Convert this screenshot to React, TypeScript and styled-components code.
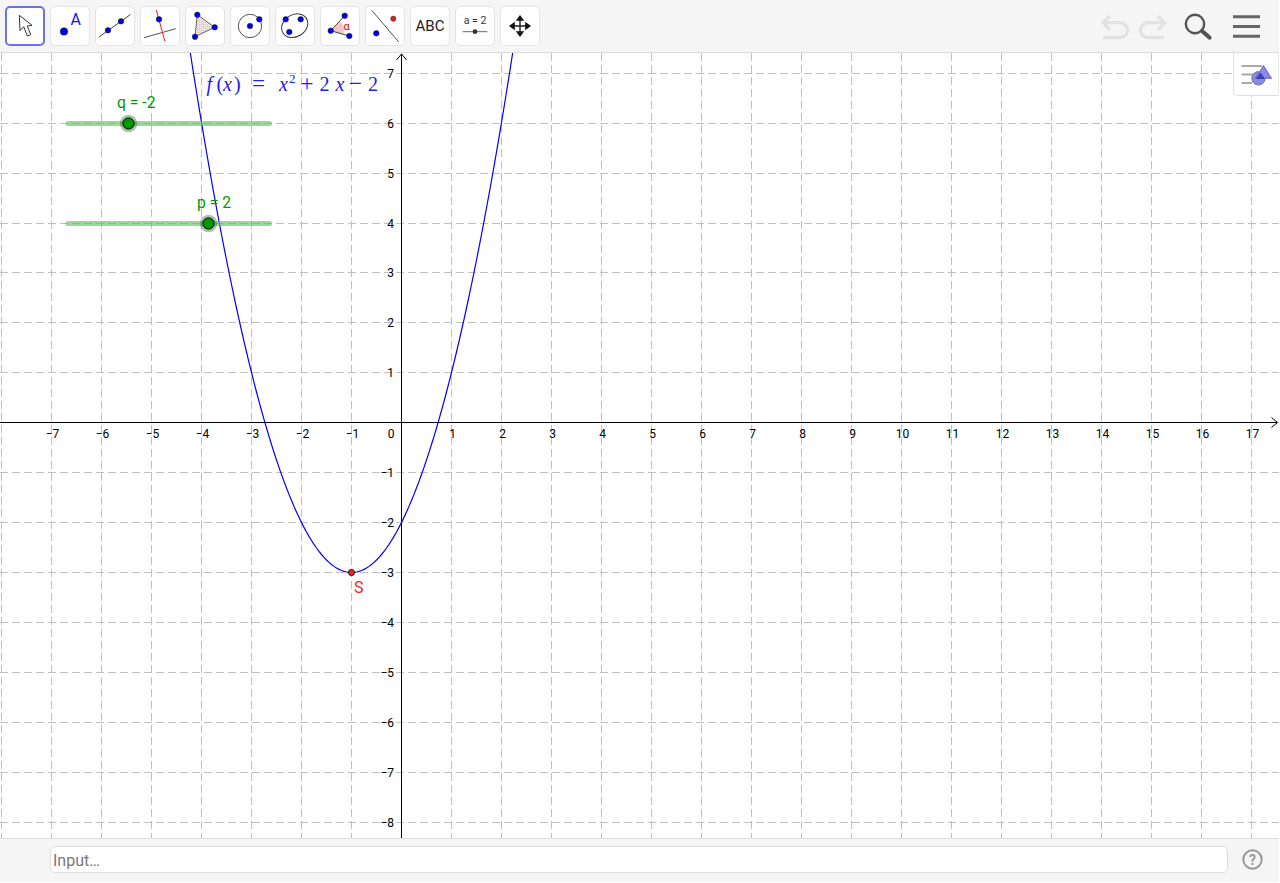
import React from 'react';
import styled, { createGlobalStyle } from 'styled-components';

const Global = createGlobalStyle`
  html, body { margin: 0; padding: 0; background: #fff; }
  body { font-family: Roboto, "Liberation Sans", sans-serif; overflow: hidden; }
`;

const Shell = styled.div`
  width: 1279px;
  height: 882px;
  display: flex;
  flex-direction: column;
`;

const Toolbar = styled.header`
  flex: none;
  height: 46px;
  display: flex;
  align-items: flex-start;
  justify-content: space-between;
  padding: 6px 0 0 5px;
  background: #f5f5f5;
  border-bottom: 1px solid #dcdcdc;
`;

const Tools = styled.div`
  display: flex;
  gap: 5px;
`;

const ToolButton = styled.div<{ $active?: boolean }>`
  width: 40px;
  height: 40px;
  box-sizing: border-box;
  background: #fff;
  border-radius: 5px;
  border: ${p => (p.$active ? '2px solid #6c70f0' : '1px solid #e4e4e4')};
  display: flex;
  align-items: center;
  justify-content: center;
  font-size: 15px;
  color: #222;
  svg { flex: none; }
`;

const Actions = styled.div`
  display: flex;
  align-items: flex-start;
  gap: 11px;
  padding-right: 13px;
  margin-top: -6px;
`;

const Canvas = styled.main`
  position: relative;
  flex: 1;
  min-height: 0;
  overflow: hidden;
  background: #fff;
`;

const Plot = styled.svg`
  display: block;
  width: 1279px;
  height: 785px;
`;

const StyleTab = styled.div`
  position: absolute;
  top: 0;
  right: 0;
  width: 46px;
  height: 43px;
  box-sizing: border-box;
  background: #fff;
  border-left: 1px solid #dedede;
  border-bottom: 1px solid #dedede;
  border-right: 1px solid #ececec;
  border-bottom-left-radius: 5px;
`;

const Footer = styled.footer`
  flex: none;
  height: 41px;
  display: flex;
  align-items: center;
  gap: 14px;
  padding: 0 16px 2px 50px;
  background: #f5f5f5;
  border-top: 1px solid #dcdcdc;
`;

const InputBar = styled.div`
  flex: 1;
  height: 27px;
  box-sizing: border-box;
  background: #fff;
  border: 1px solid #dedede;
  border-radius: 5px;
  padding: 2px 0 0 2px;
  display: flex;
  align-items: center;
  font-size: 16px;
  color: #7d7676;
`;

const Blue = '#0000e6';
const Dot = ({ cx, cy, r = 2.8, fill = Blue }: { cx: number; cy: number; r?: number; fill?: string }) => (
  <circle cx={cx} cy={cy} r={r} fill={fill} stroke="#223" strokeWidth={0.5} />
);

const Ic = ({ children }: { children: React.ReactNode }) => (
  <svg width={40} height={40} viewBox="0 0 40 40">{children}</svg>
);

const ArrowIcon = () => (
  <svg width={36} height={36} viewBox="2 2 36 36">
    <path d="M14.3 9.3 L15 24.7 L18.7 20.7 L22.3 30 L25.7 28.7 L22.3 20 L27 19.3 Z" fill="#fff" stroke="#333" strokeWidth={1} strokeLinejoin="round" />
  </svg>
);
const PointIcon = () => (
  <Ic>
    <Dot cx={14} cy={25.5} r={3.8} />
    <text x={20.5} y={19} fontSize={16} fill="#1414e6" fontFamily="Roboto, sans-serif">A</text>
  </Ic>
);
const LineIcon = () => (
  <Ic>
    <line x1={4} y1={31} x2={35.5} y2={8.5} stroke="#444" strokeWidth={1} />
    <Dot cx={13} cy={24.3} />
    <Dot cx={26} cy={15.3} />
  </Ic>
);
const PerpIcon = () => (
  <Ic>
    <line x1={4} y1={31.7} x2={35.7} y2={22.7} stroke="#555" strokeWidth={1} />
    <line x1={16.3} y1={4} x2={25} y2={35.7} stroke="#f02020" strokeWidth={1} />
    <Dot cx={19} cy={13.3} />
  </Ic>
);
const TriIcon = () => (
  <Ic>
    <defs>
      <pattern id="dots" width={2} height={2} patternUnits="userSpaceOnUse">
        <rect width={2} height={2} fill="#efe4e0" />
        <rect width={1} height={1} fill="#f2b4b4" />
      </pattern>
    </defs>
    <path d="M12.3 8.7 L29.7 21.3 L10 30.7 Z" fill="url(#dots)" stroke="#666" strokeWidth={1} />
    <Dot cx={12.3} cy={8.7} />
    <Dot cx={29.7} cy={21.3} />
    <Dot cx={10} cy={30.7} />
  </Ic>
);
const CircleIcon = () => (
  <Ic>
    <circle cx={20} cy={20} r={11.7} fill="none" stroke="#555" strokeWidth={1} />
    <Dot cx={20} cy={20} />
    <Dot cx={29.3} cy={13.3} />
  </Ic>
);
const ConicIcon = () => (
  <Ic>
    <ellipse cx={19.7} cy={19.7} rx={13.8} ry={11} transform="rotate(-32 19.7 19.7)" fill="none" stroke="#333" strokeWidth={1} />
    <Dot cx={10.7} cy={13.3} />
    <Dot cx={25.7} cy={13.3} />
    <Dot cx={14.3} cy={26} />
  </Ic>
);
const AngleIcon = () => (
  <Ic>
    <path d="M10.7 24.7 L20 15 A 13 13 0 0 1 23.5 27.9 Z" fill="#f7c4c4" stroke="none" />
    <path d="M24.7 9.7 L10.7 24.7 L29.3 30" fill="none" stroke="#444" strokeWidth={1} />
    <Dot cx={24.7} cy={9.7} />
    <Dot cx={10.7} cy={24.7} />
    <Dot cx={29.3} cy={30} />
    <text x={23.5} y={23.5} fontSize={11} fill="#f00000" fontFamily="Roboto, sans-serif">α</text>
  </Ic>
);
const ReflectIcon = () => (
  <Ic>
    <line x1={6.7} y1={4.3} x2={33.7} y2={36} stroke="#555" strokeWidth={1} />
    <Dot cx={11.3} cy={27.3} />
    <Dot cx={28.3} cy={12.7} r={2.6} fill="#f01818" />
  </Ic>
);
const SliderIcon = () => (
  <Ic>
    <text x={20} y={18} fontSize={10.5} fill="#333" textAnchor="middle" fontFamily="Roboto, sans-serif">a = 2</text>
    <line x1={7.7} y1={25.7} x2={32.3} y2={25.7} stroke="#666" strokeWidth={1} />
    <circle cx={20} cy={25.7} r={2.4} fill="#333" />
  </Ic>
);
const MoveIcon = () => (
  <Ic>
    <path d="M20 12 V28 M12 20 H28" stroke="#222" strokeWidth={1.4} />
    <path d="M20 9 L15.8 14.8 H24.2 Z M20 31 L15.8 25.2 H24.2 Z M9 20 L14.8 15.8 V24.2 Z M31 20 L25.2 15.8 V24.2 Z" fill="#111" />
  </Ic>
);

const UndoRedo = () => (
  <svg width={72} height={52} viewBox="0 0 72 52">
    <g fill="none" stroke="#e2e2e2" strokeWidth={3.2}>
      <path d="M5 22.7 H22 A 7.5 7.5 0 0 1 22 37.7 H5" />
      <path d="M12 16 L5 22.7 L12 30" />
      <path d="M67 22.7 H50 A 7.5 7.5 0 0 0 50 37.7 H66" />
      <path d="M60 16 L67 22.7 L60 30" />
    </g>
  </svg>
);

const SearchIcon = () => (
  <svg width={36} height={52} viewBox="0 0 36 52">
    <circle cx={14} cy={24} r={9.2} fill="none" stroke="#555" strokeWidth={2.4} />
    <line x1={21} y1={31} x2={28.5} y2={37.5} stroke="#555" strokeWidth={4.2} strokeLinecap="round" />
  </svg>
);

const MenuIcon = () => (
  <svg width={38} height={52} viewBox="0 0 38 52">
    <path d="M5 16.8 H32 M5 26.6 H32 M5 36.2 H32" stroke="#666" strokeWidth={3} />
  </svg>
);

const StyleIcon = () => (
  <svg width={44} height={42} viewBox="0 0 44 42">
    <path d="M7.5 13 H28 M7.5 21.5 H20 M7.5 30 H18" stroke="#aaa" strokeWidth={2} />
    <circle cx={24.5} cy={25.3} r={6.7} fill="#8888ee" stroke="#777" strokeWidth={1} />
    <path d="M29.5 12.5 L37.5 25.3 H21.5 Z" fill="#8888ee" stroke="#5555aa" strokeWidth={0.8} />
    <path d="M26.5 20 L23 25.3 H30 Z" fill="#4444cc" stroke="#222277" strokeWidth={0.6} />
  </svg>
);

const HelpIcon = () => (
  <svg width={21} height={21} viewBox="0 0 21 21">
    <circle cx={10.5} cy={10.5} r={9.2} fill="none" stroke="#999" strokeWidth={2} />
    <text x={10.5} y={15.5} textAnchor="middle" fontSize={14} fontWeight={700} fill="#999" fontFamily="Roboto, sans-serif">?</text>
  </svg>
);

const OX = 401.5;
const OY = 369.5;
const S = 50;
const W = 1279;
const H = 785;
const xs = Array.from({ length: 26 }, (_, i) => i - 8);
const ys = Array.from({ length: 16 }, (_, i) => i - 8);
const fx = (x: number) => x * x + 2 * x - 2;
/* the reference's upper gridlines sit one pixel lower than an exact 50px step */
const gy = (k: number) => OY - S * k + (k >= 4 ? 1 : 0);
const parabola = Array.from({ length: 141 }, (_, i) => {
  const x = -4.4 + i * 0.05;
  return `${i ? 'L' : 'M'}${(OX + S * x).toFixed(2)} ${(OY - S * fx(x)).toFixed(2)}`;
}).join(' ');

const sliders = [
  { y: 70.5, tx: 128.5, label: 'q = -2', lx: 117, ly: 54.5 },
  { y: 170.5, tx: 208.5, label: 'p = 2', lx: 197, ly: 154.5 },
];

const Graph = () => (
  <Plot viewBox={`0 0 ${W} ${H}`}>
    <g stroke="#c0c0c0" strokeWidth={1} strokeDasharray="8 4">
      {xs.map(k => <line key={k} x1={OX + S * k} y1={0} x2={OX + S * k} y2={H} />)}
      {ys.map(k => <line key={k} x1={0} y1={gy(k)} x2={W} y2={gy(k)} />)}
    </g>
    <g stroke="#000" strokeWidth={1} fill="none">
      <line x1={0} y1={OY} x2={1277} y2={OY} />
      <line x1={OX} y1={1} x2={OX} y2={H} />
      <path d={`M1271.5 ${OY - 5} L1277.5 ${OY} L1271.5 ${OY + 5}`} />
      <path d={`M${OX - 5} 7 L${OX} 1 L${OX + 5} 7`} />
    </g>
    <g fontFamily="Roboto, sans-serif" fontSize={12} fill="#000">
      {xs.filter(k => k >= -7 && k !== 0 && k <= 17).map(k => (
        <text key={k} x={OX + S * k + 1} y={OY + 15.5} textAnchor="middle">{k < 0 ? `−${-k}` : k}</text>
      ))}
      <text x={391} y={OY + 15.5} textAnchor="middle">0</text>
      {ys.filter(k => k !== 0).map(k => (
        <text key={k} x={394} y={gy(k) + 4.5} textAnchor="end">{k < 0 ? `−${-k}` : k}</text>
      ))}
    </g>
    <path d={parabola} fill="none" stroke="#0000ff" strokeWidth={1.2} />
    <g fontFamily="'Liberation Serif', serif" fontSize={20} fill="#2020f0">
      <text x={206.5} y={37.5} fontStyle="italic">f</text>
      <text x={216.5} y={37.5}>(</text>
      <text x={223} y={37.5} fontStyle="italic">x</text>
      <text x={234} y={37.5}>)</text>
      <text x={252} y={37.5} fontSize={23}>=</text>
      <text x={279} y={37.5} fontStyle="italic">x</text>
      <text x={289} y={29.5} fontSize={13}>2</text>
      <text x={300.5} y={37.5} fontSize={23}>+</text>
      <text x={319.5} y={37.5}>2</text>
      <text x={335.5} y={37.5} fontStyle="italic">x</text>
      <text x={349} y={37.5} fontSize={23}>−</text>
      <text x={368} y={37.5}>2</text>
    </g>
    {sliders.map(s => (
      <g key={s.label}>
        <line x1={68} y1={s.y} x2={269.5} y2={s.y} stroke="#66c266" strokeOpacity={0.65} strokeWidth={5} strokeLinecap="round" />
        <circle cx={s.tx} cy={s.y} r={8.7} fill="#336633" fillOpacity={0.4} />
        <circle cx={s.tx} cy={s.y} r={5.6} fill="#009900" stroke="#000" strokeWidth={1} />
        <text x={s.lx} y={s.ly} fontFamily="Roboto, sans-serif" fontSize={15.7} fill="#009900">{s.label}</text>
      </g>
    ))}
    <circle cx={351.5} cy={519.5} r={3.1} fill="#f02020" stroke="#000" strokeWidth={0.8} />
    <text x={354} y={540} fontFamily="Roboto, sans-serif" fontSize={16} fill="#ff2020">S</text>
  </Plot>
);

export default function App() {
  return (
    <Shell>
      <Global />
      <Toolbar>
        <Tools>
          <ToolButton $active><ArrowIcon /></ToolButton>
          <ToolButton><PointIcon /></ToolButton>
          <ToolButton><LineIcon /></ToolButton>
          <ToolButton><PerpIcon /></ToolButton>
          <ToolButton><TriIcon /></ToolButton>
          <ToolButton><CircleIcon /></ToolButton>
          <ToolButton><ConicIcon /></ToolButton>
          <ToolButton><AngleIcon /></ToolButton>
          <ToolButton><ReflectIcon /></ToolButton>
          <ToolButton>ABC</ToolButton>
          <ToolButton><SliderIcon /></ToolButton>
          <ToolButton><MoveIcon /></ToolButton>
        </Tools>
        <Actions>
          <UndoRedo />
          <SearchIcon />
          <MenuIcon />
        </Actions>
      </Toolbar>
      <Canvas>
        <Graph />
        <StyleTab><StyleIcon /></StyleTab>
      </Canvas>
      <Footer>
        <InputBar>Input…</InputBar>
        <HelpIcon />
      </Footer>
    </Shell>
  );
}
